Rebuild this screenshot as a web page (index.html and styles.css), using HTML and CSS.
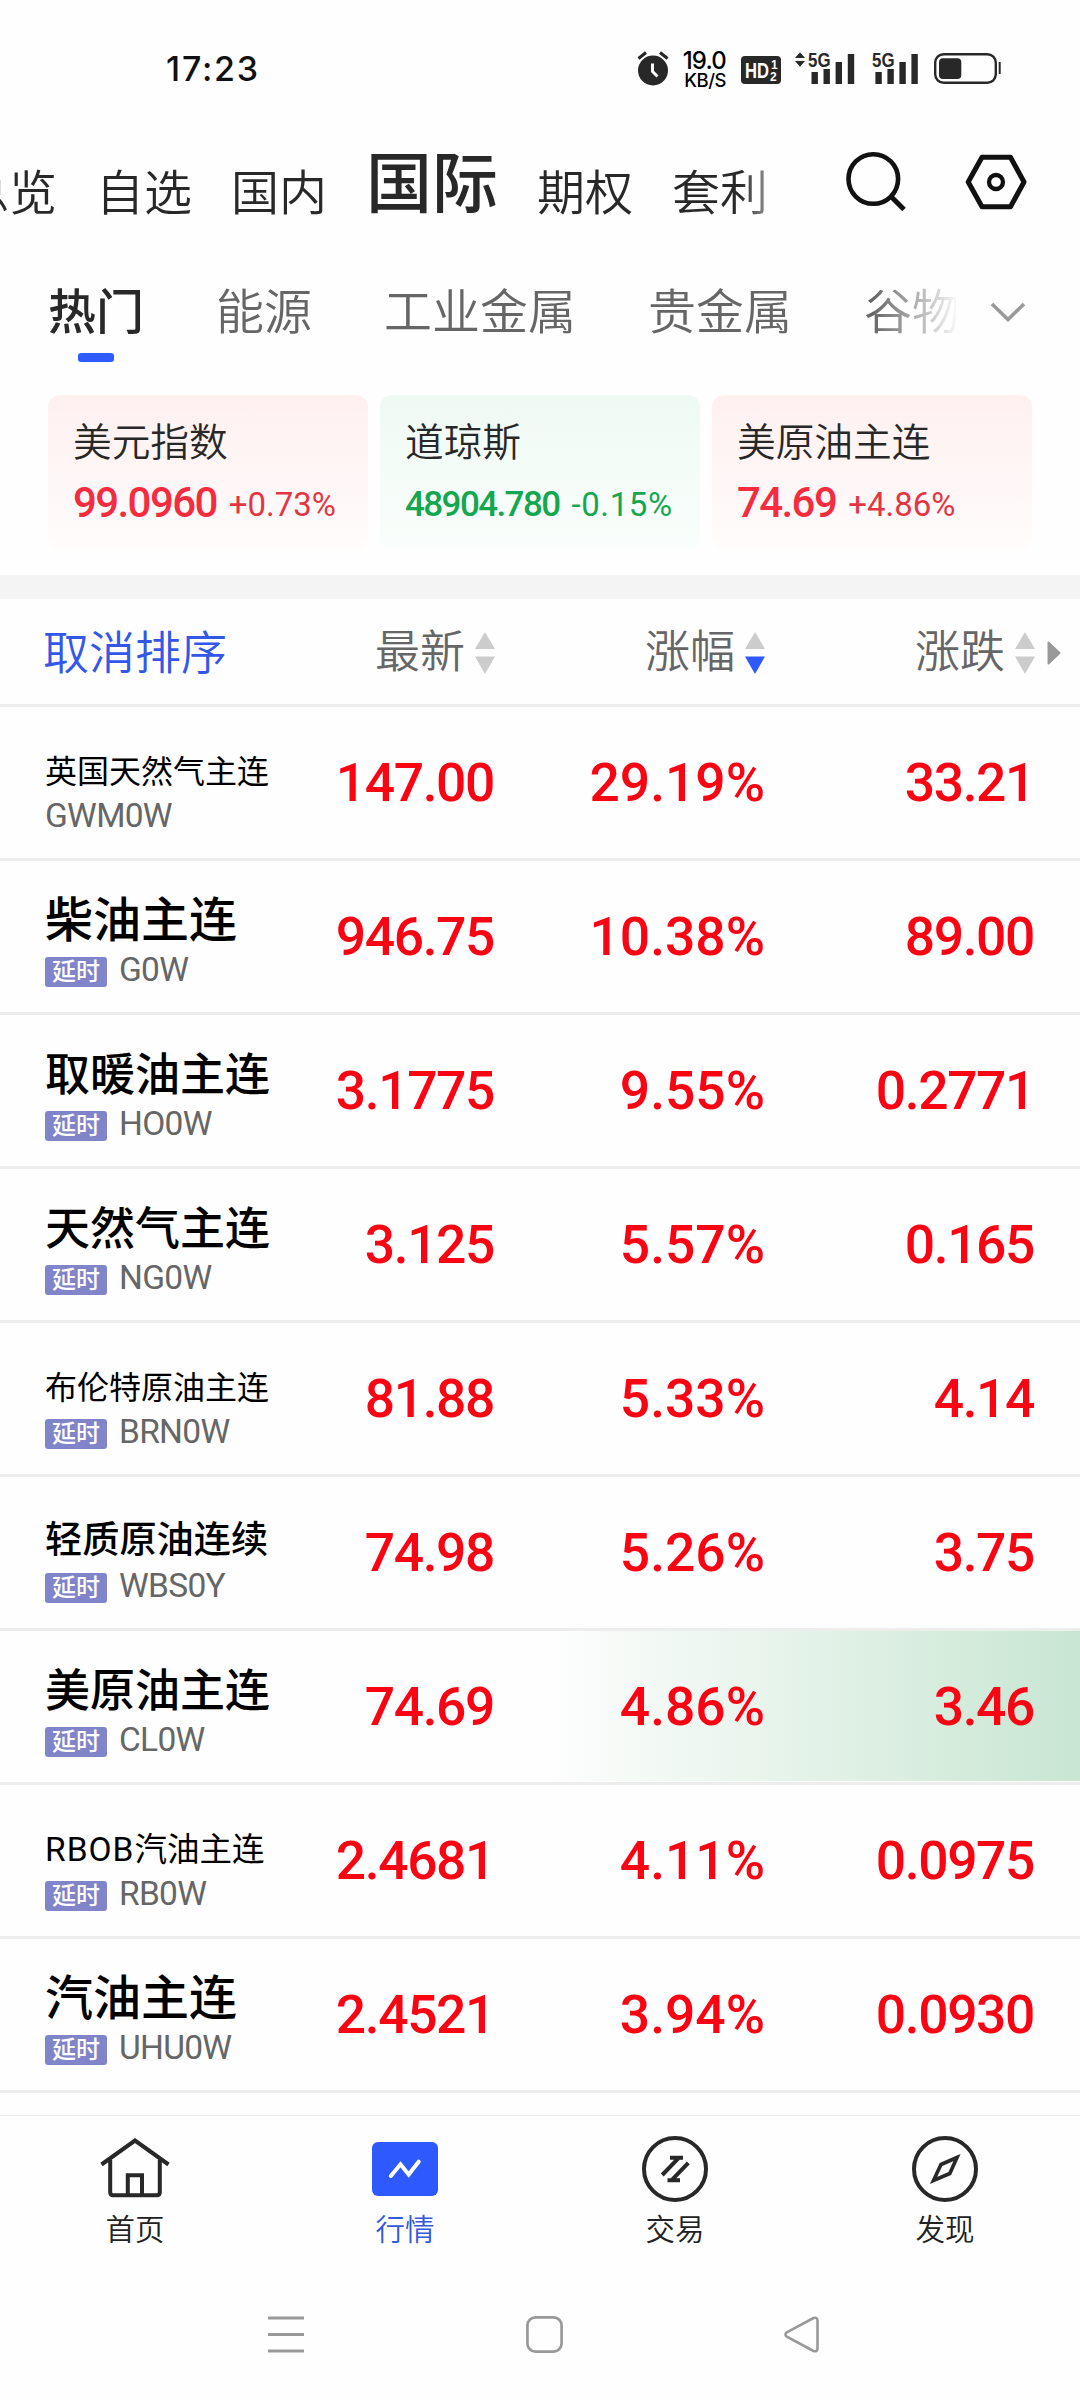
FILE: index.html
```html
<!DOCTYPE html>
<html lang="zh-CN">
<head>
<meta charset="utf-8">
<title>行情 - 国际</title>
<link rel="stylesheet" href="styles.css">
</head>
<body>
<div class="screen">
  <header class="status">
    <span class="clock">17:23</span>
    <div class="status-icons">
      <svg class="alarm" width="32" height="36" viewBox="0 0 32 36"><circle cx="16" cy="20.500" r="15" fill="#282828"/><path d="M1.500 8.500 9 2.500M30.500 8.500 23 2.500" stroke="#282828" stroke-width="3.200"/><path d="M15.500 13.500v8l5 5" fill="none" stroke="#fff" stroke-width="3"/></svg>
      <div class="speed"><b>19.0</b><span>KB/S</span></div>
      <svg class="hd" width="40" height="28" viewBox="0 0 40 28"><rect width="40" height="28" rx="4" fill="#282828"/><text x="4" y="22" class="hd-text" textLength="24" lengthAdjust="spacingAndGlyphs">HD</text><text x="30" y="13" class="hd-num">1</text><text x="29" y="25" class="hd-num">2</text></svg>
      <svg class="sig" width="60" height="34" viewBox="0 0 60 34"><path d="M0 8 5 2.300 10 8zM0 11 5 16.700 10 11z" fill="#282828"/><text x="13" y="16.500" class="g5" textLength="22.500" lengthAdjust="spacingAndGlyphs">5G</text><path d="M16.500 22h6.400v12h-6.400zM28.500 19h6.400v15h-6.400zM40.600 12h6.400v22h-6.400zM52.800 4h6.400v30h-6.400z" fill="#282828"/></svg>
      <svg class="sig2" width="47" height="34" viewBox="0 0 47 34"><text x="0" y="16.500" class="g5" textLength="22.500" lengthAdjust="spacingAndGlyphs">5G</text><path d="M3.400 22h6.400v12H3.400zM15.400 19h6.400v15h-6.400zM27.400 12h6.400v22h-6.400zM39.400 4h6.400v30h-6.400z" fill="#282828"/></svg>
      <svg class="battery" width="68" height="32" viewBox="0 0 68 32"><rect x="1.200" y="1.200" width="60.600" height="28.600" rx="8.500" fill="none" stroke="#282828" stroke-width="2.400"/><rect x="5" y="5.300" width="22.300" height="20.700" rx="4" fill="#282828"/><path d="M65.700 9v12" stroke="#282828" stroke-width="2"/></svg>
    </div>
  </header>

  <nav class="markets">
    <div class="market-tabs"><span>总览</span><span>自选</span><span>国内</span><span class="on">国际</span><span>期权</span><span>套利</span></div>
    <svg class="search" width="62" height="62" viewBox="0 0 62 62"><circle cx="29.300" cy="28" r="24.800" fill="none" stroke="#111" stroke-width="4.600"/><path d="M47 45.500 60 58.500" stroke="#111" stroke-width="5"/></svg>
    <svg class="hex" width="62" height="56" viewBox="0 0 62 56"><path d="M17 3.200h28.500L59 28 45.500 52.800H17L3.200 28z" fill="none" stroke="#111" stroke-width="5" stroke-linejoin="round"/><circle cx="31" cy="28" r="7" fill="none" stroke="#111" stroke-width="4.300"/></svg>
  </nav>

  <nav class="groups">
    <div class="group-tabs"><span class="on">热门</span><span>能源</span><span>工业金属</span><span>贵金属</span><span>谷物</span></div>
    <svg class="chev" width="36" height="22" viewBox="0 0 36 22"><path d="M2 3 18 18.500 34 3" fill="none" stroke="#999" stroke-width="3.600"/></svg>
  </nav>

  <section class="cards">
    <div class="card up"><h3>美元指数</h3><p><b>99.0960</b><span>+0.73%</span></p></div>
    <div class="card down"><h3>道琼斯</h3><p><b>48904.780</b><span>-0.15%</span></p></div>
    <div class="card up"><h3>美原油主连</h3><p><b>74.69</b><span>+4.86%</span></p></div>
  </section>

  <main class="table">
    <div class="thead">
      <span class="reset">取消排序</span>
      <span class="th">最新<svg class="sort" width="20" height="42" viewBox="0 0 20 42"><path d="M10 0 20 17H0z"/><path d="M10 42 20 24.500H0z"/></svg></span>
      <span class="th">涨幅<svg class="sort desc" width="20" height="42" viewBox="0 0 20 42"><path d="M10 0 20 17H0z"/><path d="M10 42 20 24.500H0z"/></svg></span>
      <span class="th">涨跌<svg class="sort" width="20" height="42" viewBox="0 0 20 42"><path d="M10 0 20 17H0z"/><path d="M10 42 20 24.500H0z"/></svg></span>
      <svg class="more" width="14" height="24" viewBox="0 0 14 24"><path d="M1.500 1.500 12.500 12 1.500 22.500z" fill="#999" stroke="#999" stroke-width="2" stroke-linejoin="round"/></svg>
    </div>
    <div class="row"><div class="name"><p><span class="s7">英国天然气主连</span></p><div class="code">GWM0W</div></div><b>147.00</b><b class="pct">29.19%</b><b>33.21</b></div>
    <div class="row"><div class="name"><p>柴油主连</p><div class="code"><i>延时</i>G0W</div></div><b>946.75</b><b class="pct">10.38%</b><b>89.00</b></div>
    <div class="row"><div class="name"><p><span class="s5">取暖油主连</span></p><div class="code"><i>延时</i>HO0W</div></div><b>3.1775</b><b class="pct">9.55%</b><b>0.2771</b></div>
    <div class="row"><div class="name"><p><span class="s5">天然气主连</span></p><div class="code"><i>延时</i>NG0W</div></div><b>3.125</b><b class="pct">5.57%</b><b>0.165</b></div>
    <div class="row"><div class="name"><p><span class="s7">布伦特原油主连</span></p><div class="code"><i>延时</i>BRN0W</div></div><b>81.88</b><b class="pct">5.33%</b><b>4.14</b></div>
    <div class="row"><div class="name"><p><span class="s6">轻质原油连续</span></p><div class="code"><i>延时</i>WBS0Y</div></div><b>74.98</b><b class="pct">5.26%</b><b>3.75</b></div>
    <div class="row flash"><div class="name"><p><span class="s5">美原油主连</span></p><div class="code"><i>延时</i>CL0W</div></div><b>74.69</b><b class="pct">4.86%</b><b>3.46</b></div>
    <div class="row"><div class="name"><p><span class="s8"><span class="latin">RBOB</span>汽油主连</span></p><div class="code"><i>延时</i>RB0W</div></div><b>2.4681</b><b class="pct">4.11%</b><b>0.0975</b></div>
    <div class="row"><div class="name"><p>汽油主连</p><div class="code"><i>延时</i>UHU0W</div></div><b>2.4521</b><b class="pct">3.94%</b><b>0.0930</b></div>
  </main>

  <nav class="tabbar">
    <a><svg width="70" height="68" viewBox="-35 -34 70 68" fill="none" stroke="#282828" stroke-width="4"><path d="M-33.500-4.500 0-28.500 33.500-4.500M-24.800-9V23.300q0 3 3 3h43.600q3 0 3-3V-9M-7.200 26V6.200H7V26"/></svg>首页</a>
    <a class="on"><svg width="70" height="68" viewBox="-35 -34 70 68"><rect x="-33" y="-27" width="66" height="54" rx="6" fill="#2d59ff"/><path d="M-14.200 7-4.500-4.700 3.700 5.500 13.700-7.300" fill="none" stroke="#fff" stroke-width="4" stroke-linecap="round"/></svg>行情</a>
    <a><svg width="70" height="68" viewBox="-35 -34 70 68" fill="none" stroke="#282828" stroke-width="4"><circle r="31"/><path d="M-12.800 6 4-11.300M-5-11.300H8M13.300-6.200-3.500 11.300M-7.500 11.300H5"/></svg>交易</a>
    <a><svg width="70" height="68" viewBox="-35 -34 70 68" fill="none" stroke="#282828" stroke-width="4"><circle r="31"/><path d="M12-11.500-4-4.500-11.500 11.500 4.800 4.500z" stroke-width="3.600"/></svg>发现</a>
  </nav>

  <footer class="sysnav">
    <svg width="36" height="37" viewBox="0 0 36 37"><path d="M0 2h36M0 18.500h36M0 35h36" stroke="#999" stroke-width="3"/></svg>
    <svg width="37" height="37" viewBox="0 0 37 37"><rect x="1.400" y="1.400" width="34.200" height="34.200" rx="8" fill="none" stroke="#999" stroke-width="2.700"/></svg>
    <svg width="35" height="37" viewBox="0 0 35 37"><path d="M2.800 16.300 29.500 2Q33.400.8 33.500 4.500v28Q33.400 36.200 29.500 35L2.800 20.700Q0 18.500 2.800 16.300z" fill="none" stroke="#999" stroke-width="2.600"/></svg>
  </footer>
</div>
</body>
</html>
```
FILE: styles.css
```css
* { box-sizing: border-box; margin: 0; padding: 0; }
body { background: #fff; }
svg { display: block; flex: none; }

.screen {
  width: 1080px;
  height: 2400px;
  overflow: hidden;
  display: flex;
  flex-direction: column;
  background: #fefefe;
  color: #282828;
  font-family: Roboto, "Noto Sans CJK SC", sans-serif;
  white-space: nowrap;
}

/* status bar */
.status {
  height: 136px;
  padding: 0 78px 0 166px;
  display: flex;
  justify-content: space-between;
  align-items: flex-start;
}
.clock { font: 500 34px/40px Inter, sans-serif; letter-spacing: 1.800px; margin-top: 49px; color: #111; }
.status-icons { display: flex; margin-top: 50px; }
.alarm { margin-right: 13px; }
.speed { width: 44px; display: flex; flex-direction: column; align-items: flex-end; font-family: Inter, sans-serif; color: #000; }
.speed b { font-size: 24px; line-height: 21px; font-weight: 500; letter-spacing: -0.800px; }
.speed span { font-size: 18.500px; line-height: 18px; font-weight: 500; letter-spacing: -0.500px; }
.hd { margin: 6px 14px 0 15px; }
.hd-text { font: 700 22px "Liberation Sans", sans-serif; fill: #fff; }
.hd-num { font: 700 12px "Liberation Sans", sans-serif; fill: #fff; }
.sig { margin-right: 17px; }
.g5 { font: 700 20px "Liberation Sans", sans-serif; fill: #282828; }
.sig2 { margin-right: 15px; }
.battery { margin-top: 3px; }

/* market tabs */
.markets { height: 122px; display: flex; padding-right: 53px; }
.market-tabs {
  width: 796px;
  margin-right: 48px;
  overflow: hidden;
  display: flex;
  justify-content: flex-end;
  align-items: baseline;
  gap: 39px;
  padding: 10px 28px 0 0;
  font-size: 48px;
  line-height: 88px;
  font-weight: 350;
  -webkit-mask-image: linear-gradient(90deg, #000 740px, transparent 796px);
  mask-image: linear-gradient(90deg, #000 740px, transparent 796px);
}
.market-tabs span { flex: none; }
.market-tabs .on { font-size: 66px; font-weight: 500; line-height: 84px; position: relative; top: -3px; }
.search { margin: 15px 59px 0 0; }
.hex { margin-top: 18px; }

/* group tabs */
.groups { height: 137px; display: flex; padding: 20px 54px 0 48px; justify-content: space-between; }
.group-tabs {
  width: 908px;
  overflow: hidden;
  display: flex;
  gap: 72px;
  font-size: 48px;
  line-height: 70px;
  font-weight: 350;
  color: #666;
  -webkit-mask-image: linear-gradient(90deg, #000 825px, transparent 912px);
  mask-image: linear-gradient(90deg, #000 825px, transparent 912px);
}
.group-tabs span { flex: none; display: flex; flex-direction: column; align-items: center; }
.group-tabs .on { color: #282828; font-weight: 500; }
.group-tabs .on::after { content: ""; width: 36px; height: 9px; margin-top: 5px; border-radius: 3px; background: #2d5bff; }
.chev { margin-top: 23px; }

/* index cards */
.cards { height: 204px; padding: 0 48px 24px; border-bottom: 24px solid #f4f4f4; display: grid; grid-template-columns: repeat(3, 1fr); gap: 12px; }
.card { height: 156px; border-radius: 12px; padding: 21px 0 0 25px; }
.card.up { background: linear-gradient(#fff0f0, #fffcfc); color: #f52c3e; }
.card.down { background: linear-gradient(#effaf4, #fafefc); color: #14a74f; }
.card h3 { font-size: 38.700px; line-height: 54px; font-weight: 350; color: #282828; }
.card p { display: flex; align-items: baseline; gap: 12px; line-height: 66px; }
.card b { font-size: 42px; font-weight: 500; letter-spacing: -1.600px; }
.card span { font-size: 33px; color: #e23645; position: relative; top: -1px; }
.card.down b { font-size: 35px; letter-spacing: -1.600px; }
.card.down p { line-height: 70px; }
.card.down span { color: #14a74f; top: 0; letter-spacing: 0.600px; }

/* quote table */
.thead, .row { display: grid; grid-template-columns: 225px 270px 270px 270px 45px; border-bottom: 3px solid #ededed; }
.thead { height: 108px; padding-top: 2px; align-items: center; font-size: 45px; line-height: 60px; font-weight: 350; color: #666; }
.reset { padding-left: 43px; font-size: 46px; color: #3358e8; }
.th { display: flex; justify-content: flex-end; align-items: center; gap: 10px; }
.sort { fill: #ccc; }
.sort.desc path:last-child { fill: #2f59ff; }
.more { margin-left: 12px; }
.row { height: 154px; align-items: center; }
.row > b { font-size: 53.400px; font-weight: 500; line-height: 60px; text-align: right; letter-spacing: -1.400px; padding-right: 1px; color: #fa0414; }
.row > .pct { letter-spacing: 0; padding: 0; }
.name { height: 151px; padding: 35px 0 0 45px; }
.name p { font-size: 48px; line-height: 50px; font-weight: 500; color: #000; }
.name p span { line-height: 1; }
.s5 { font-size: 45px; }
.s6 { font-size: 37.200px; }
.s7, .s8 { font-size: 32px; font-weight: 400; }
.s8 { font-size: 32.500px; }
.latin { font-size: 33.500px; letter-spacing: 1px; }
.code { height: 40px; margin-top: 4px; display: flex; align-items: center; font-size: 33.500px; line-height: 40px; letter-spacing: -0.700px; color: #666; }
.code i { flex: none; margin: 4px 12px 0 0; width: 62px; height: 30px; border-radius: 3px; background: #8084c8; color: #fff; font-style: normal; font-weight: 500; font-size: 24px; line-height: 31px; letter-spacing: 0; text-align: center; }
.flash { background: linear-gradient(90deg, transparent 545px, #c8e6d2 1080px) 0 0 / 100% 150px no-repeat; }

/* bottom bars */
.tabbar { margin-top: 22px; height: 162px; border-top: 1px solid #e9e9e9; display: grid; grid-template-columns: repeat(4, 1fr); padding-top: 19px; }
.tabbar a { display: flex; flex-direction: column; align-items: center; font-size: 29.500px; line-height: 54px; font-weight: 350; color: #222; }
.tabbar .on { color: #3358d8; }
.sysnav { padding: 39px 261px 0 268px; display: flex; justify-content: space-between; }
```
